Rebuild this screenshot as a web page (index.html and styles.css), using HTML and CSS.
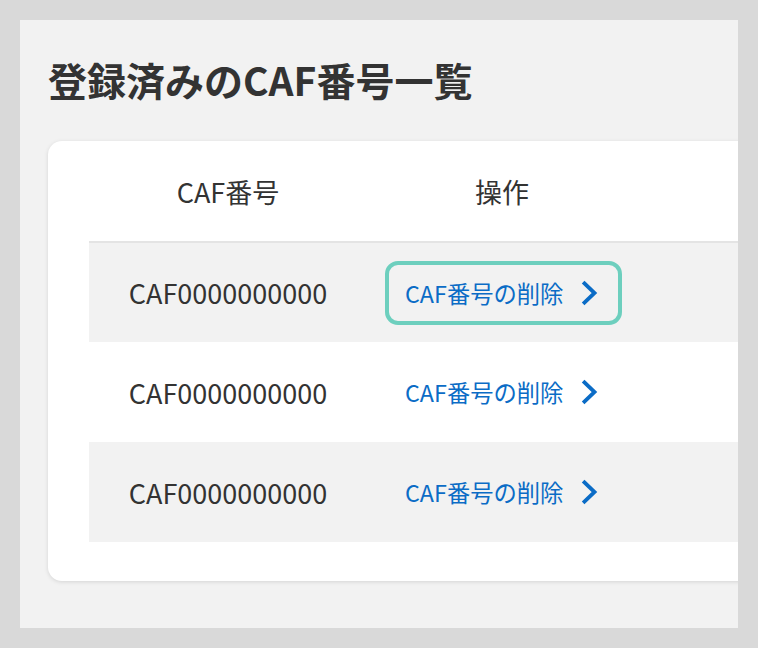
FILE: index.html
```html
<!DOCTYPE html>
<html lang="ja">
<head>
<meta charset="utf-8">
<link rel="stylesheet" href="styles.css">
</head>
<body>
<div class="panel">
  <h1 class="title">登録済みのCAF番号一覧</h1>
  <div class="card">
    <div class="table">
      <div class="row head">
        <div class="cell c1">CAF番号</div>
        <div class="cell c2 center">操作</div>
      </div>
      <div class="row body alt first">
        <div class="cell c1">CAF0000000000</div>
        <div class="cell c2"><a class="link focus" href="#">CAF番号の削除<svg class="chev" viewBox="0 0 18 26" width="18" height="26"><path d="M3.5 3.5 L13.5 13 L3.5 22.5" fill="none" stroke="currentColor" stroke-width="3.8" stroke-linecap="square"/></svg></a></div>
      </div>
      <div class="row body">
        <div class="cell c1">CAF0000000000</div>
        <div class="cell c2"><a class="link" href="#">CAF番号の削除<svg class="chev" viewBox="0 0 18 26" width="18" height="26"><path d="M3.5 3.5 L13.5 13 L3.5 22.5" fill="none" stroke="currentColor" stroke-width="3.8" stroke-linecap="square"/></svg></a></div>
      </div>
      <div class="row body alt">
        <div class="cell c1">CAF0000000000</div>
        <div class="cell c2"><a class="link" href="#">CAF番号の削除<svg class="chev" viewBox="0 0 18 26" width="18" height="26"><path d="M3.5 3.5 L13.5 13 L3.5 22.5" fill="none" stroke="currentColor" stroke-width="3.8" stroke-linecap="square"/></svg></a></div>
      </div>
    </div>
  </div>
</div>
</body>
</html>
```
FILE: styles.css
```css
* { box-sizing: border-box; }
html, body { margin: 0; padding: 0; }
body {
  background: #d9d9d9;
  padding: 20px;
  font-family: "Noto Sans CJK JP", "Noto Sans", sans-serif;
  color: #333;
}
.panel {
  background: #f2f2f2;
  height: 608px;
  overflow: hidden;
  padding: 0 0 0 28px;
}
.title {
  margin: 0;
  padding-top: 34px;
  height: 121px;
  font-size: 39px;
  line-height: 50px;
  font-weight: 700;
  color: #333;
  padding-left: 0;
}
.card {
  width: 800px;
  background: #fff;
  border-radius: 14px;
  box-shadow: 0 1px 4px rgba(0,0,0,0.12);
  padding: 0 0 39px 41px;
}
.row {
  display: flex;
  height: 100px;
  align-items: center;
}
.row.first { border-top: 2px solid #e4e4e4; height: 101px; }
.row.alt { background: #f2f2f2; }
.cell.c1 { width: 278px; text-align: center; font-size: 27px; }
.cell.c2 { width: 270px; }
.cell.center { text-align: center; }
.head .cell { font-size: 27px; }
.link {
  display: inline-flex;
  align-items: center;
  margin-left: 18px;
  height: 64px;
  padding: 0 19px 0 16px;
  border: 4px solid transparent;
  border-radius: 13px;
  color: #0b6cc6;
  text-decoration: none;
  font-size: 23.3px;
  gap: 18px;
}
.link.focus { border-color: #6dcfbe; }
.chev { display: block; }
```
